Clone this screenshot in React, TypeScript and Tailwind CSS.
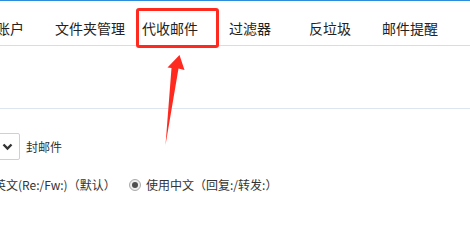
import React from "react";

const tabs = ["账户", "文件夹管理", "代收邮件", "过滤器", "反垃圾", "邮件提醒"];

function Radio() {
  return (
    <span className="flex h-[12px] w-[12px] items-center justify-center rounded-full border border-[#aaaaaa] bg-[#eeeeee]">
      <span className="h-[6px] w-[6px] rounded-full bg-[#4f4f4f]" />
    </span>
  );
}

export default function App() {
  return (
    <div
      className="relative h-[233px] w-[470px] overflow-hidden bg-white text-[#333]"
      style={{ fontFamily: '"Noto Sans CJK SC", "Microsoft YaHei", sans-serif' }}
    >
      <div className="h-px bg-[#2d8cdb]" />
      <nav className="flex h-[45px] items-center border-b border-[#dcdcdc] pt-[10px] ml-[-30px]">
        {tabs.map((t) => (
          <div key={t} className="w-[80px] shrink-0 text-center text-[14px] leading-none text-[#222] whitespace-nowrap">
            {t}
          </div>
        ))}
      </nav>
      <div className="h-[63px] border-b border-[#dde6ee]" />

      <div className="mt-[24px] flex items-center gap-[6px]">
        <div className="ml-[-31px] flex h-[27px] w-[51px] items-center justify-end rounded-[2px] border border-[#d0d0d0] pr-[6px]">
          <svg width="11" height="8" viewBox="0 0 11 8">
            <polyline points="1.5,1.5 5.5,5.5 9.5,1.5" fill="none" stroke="#333" strokeWidth="2.4" />
          </svg>
        </div>
        <span className="text-[12px] leading-none">封邮件</span>
      </div>

      <div className="mt-[19px] flex items-center text-[12px] leading-none">
        <div className="ml-[-6px] w-[135px] shrink-0 whitespace-nowrap">
          英文(Re:/Fw:)（默认）
        </div>
        <div className="flex items-center gap-[5px] whitespace-nowrap">
          <Radio />
          <span>使用中文（回复:/转发:）</span>
        </div>
      </div>

      <div className="absolute left-[136px] top-[8px] h-[40px] w-[83px] rounded-[3px] border-[3px] border-[#ff2a1f]" />
      <svg className="absolute left-0 top-0" width="470" height="233" viewBox="0 0 470 233">
        <polygon
          points="179.5,55 184.5,70 178.5,68.5 165.5,145 171.5,68 167.5,67.5"
          fill="#ff2a1f"
        />
      </svg>
    </div>
  );
}
